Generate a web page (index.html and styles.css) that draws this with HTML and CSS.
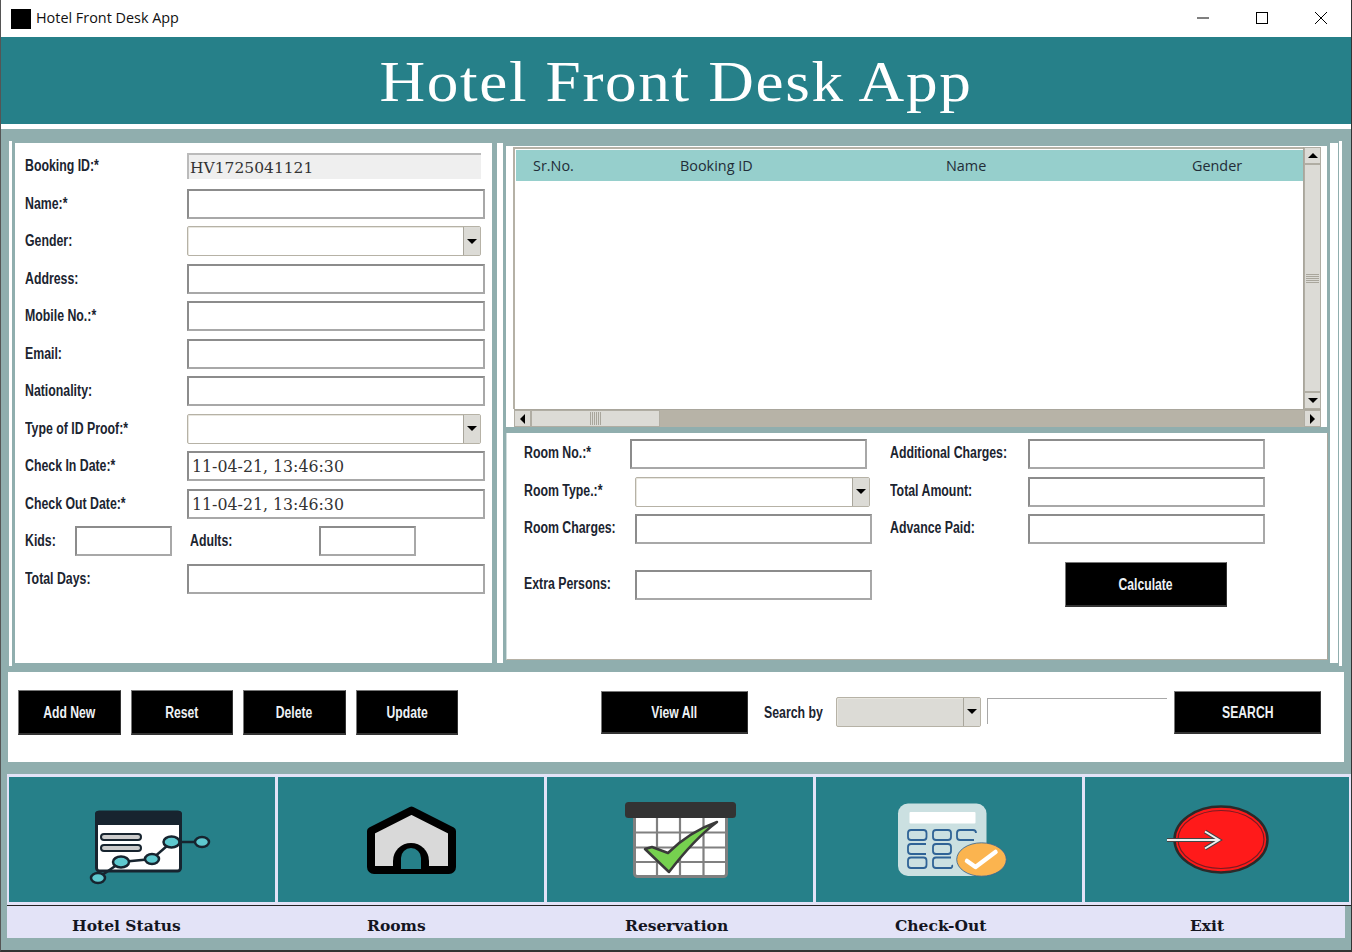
FILE: index.html
```html
<!DOCTYPE html>
<html lang="en">
<head>
<meta charset="utf-8">
<title>Hotel Front Desk App</title>
<link rel="stylesheet" href="styles.css">
</head>
<body>
<div class="window">
  <header class="titlebar">
    <span class="app-icon"></span>
    <span class="app-name">Hotel Front Desk App</span>
    <div class="win-controls">
      <svg class="win-btn" viewBox="0 0 12 12"><path d="M0 6H12" stroke="#000" fill="none"/></svg>
      <svg class="win-btn" viewBox="0 0 12 12"><rect x=".5" y=".5" width="11" height="11" stroke="#000" fill="none"/></svg>
      <svg class="win-btn" viewBox="0 0 12 12"><path d="M0 0L12 12M12 0L0 12" stroke="#000" fill="none"/></svg>
    </div>
  </header>
  <div class="banner"><h1>Hotel Front Desk App</h1></div>

  <main class="workspace">
    <div class="panels">
      <i class="stripe"></i>
      <section class="guest-panel">
        <div class="row"><label>Booking ID:*</label><div class="field readonly">HV1725041121</div></div>
        <div class="row"><label>Name:*</label><div class="field"></div></div>
        <div class="row"><label>Gender:</label><div class="combo"><span class="combo-btn"><b class="tri"></b></span></div></div>
        <div class="row"><label>Address:</label><div class="field"></div></div>
        <div class="row"><label>Mobile No.:*</label><div class="field"></div></div>
        <div class="row"><label>Email:</label><div class="field"></div></div>
        <div class="row"><label>Nationality:</label><div class="field"></div></div>
        <div class="row"><label>Type of ID Proof:*</label><div class="combo"><span class="combo-btn"><b class="tri"></b></span></div></div>
        <div class="row"><label>Check In Date:*</label><div class="field value">11-04-21, 13:46:30</div></div>
        <div class="row"><label>Check Out Date:*</label><div class="field value">11-04-21, 13:46:30</div></div>
        <div class="row kids-row">
          <label class="lbl-kids">Kids:</label><div class="field small"></div>
          <label class="lbl-adults">Adults:</label><div class="field small"></div>
        </div>
        <div class="row"><label>Total Days:</label><div class="field"></div></div>
      </section>
      <i class="stripe mid"></i>

      <div class="right-col">
        <section class="table-panel">
          <div class="table-inner">
            <div class="table-main">
              <div class="thead">
                <span>Sr.No.</span><span>Booking ID</span><span>Name</span><span>Gender</span>
              </div>
              <div class="tbody"></div>
            </div>
            <div class="vscroll">
              <span class="sb-btn"><b class="tri up"></b></span>
              <span class="sb-thumb-v"><i class="grip-h"></i></span>
              <span class="sb-btn"><b class="tri"></b></span>
            </div>
          </div>
          <div class="hscroll">
            <span class="sb-btn"><b class="tri left"></b></span>
            <span class="sb-thumb-h"><i class="grip-v"></i></span>
            <span class="sb-track"></span>
            <span class="sb-btn"><b class="tri right"></b></span>
          </div>
        </section>
        <section class="room-panel">
          <div class="room-left">
            <div class="room-row"><label>Room No.:*</label><div class="field room-w"></div></div>
            <div class="room-row"><label>Room Type.:*</label><div class="combo room-combo"><span class="combo-btn"><b class="tri"></b></span></div></div>
            <div class="room-row"><label>Room Charges:</label><div class="field room-w"></div></div>
            <div class="room-row extra"><label>Extra Persons:</label><div class="field room-w"></div></div>
          </div>
          <div class="room-right">
            <div class="room-row"><label>Additional Charges:</label><div class="field room-w"></div></div>
            <div class="room-row"><label>Total Amount:</label><div class="field room-w"></div></div>
            <div class="room-row"><label>Advance Paid:</label><div class="field room-w"></div></div>
            <button class="btn calc"><span>Calculate</span></button>
          </div>
        </section>
      </div>
      <div class="side-stripes"><i></i><i></i></div>
    </div>

    <section class="actions">
      <div class="action-btns">
        <button class="btn act"><span>Add New</span></button>
        <button class="btn act"><span>Reset</span></button>
        <button class="btn act"><span>Delete</span></button>
        <button class="btn act"><span>Update</span></button>
      </div>
      <div class="search">
        <button class="btn wide"><span>View All</span></button>
        <label class="search-lbl">Search by</label>
        <div class="combo grey"><span class="combo-btn"><b class="tri"></b></span></div>
        <div class="search-input"></div>
        <button class="btn wide"><span>SEARCH</span></button>
      </div>
    </section>

    <nav class="tiles">
      <div class="tile">
        <svg class="tile-art" viewBox="0 0 266 125">
          <rect x="87.5" y="35" width="84" height="59" rx="3" fill="#fff" stroke="#17242f" stroke-width="3"/>
          <path d="M86 48V37a3 3 0 0 1 3-3h81a3 3 0 0 1 3 3v11z" fill="#17242f"/>
          <rect x="92" y="57" width="40" height="6" rx="3" fill="#ccc" stroke="#17242f" stroke-width="2"/>
          <rect x="92" y="68" width="40" height="6" rx="3" fill="#ccc" stroke="#17242f" stroke-width="2"/>
          <path d="M89 101L112 85L143 82L162.500 65L193 65" fill="none" stroke="#17242f" stroke-width="2.500"/>
          <g fill="#5ec9cf" stroke="#17242f" stroke-width="2.500">
            <ellipse cx="89" cy="101" rx="7" ry="5"/><ellipse cx="112" cy="85" rx="8" ry="5.500"/>
            <ellipse cx="143" cy="82" rx="7" ry="5"/><ellipse cx="162.500" cy="65" rx="8" ry="5.500"/>
            <ellipse cx="193" cy="65" rx="7" ry="5"/>
          </g>
        </svg>
      </div>
      <div class="tile">
        <svg class="tile-art" viewBox="0 0 266 125">
          <path fill="#d9d9d9" stroke="#000" stroke-width="8" stroke-linejoin="round" d="M133.500 33.500L174 54V90a3 3 0 0 1-3 3H96a3 3 0 0 1-3-3V54z"/>
          <path fill="#000" d="M115 95V84a18 18 0 0 1 36 0V95z"/>
          <path fill="#268089" d="M123 92V81a10 10 0 0 1 20 0V92z"/>
        </svg>
      </div>
      <div class="tile">
        <svg class="tile-art" viewBox="0 0 266 125">
          <rect x="87.500" y="35" width="92" height="64.500" rx="3" fill="#fff" stroke="#808080" stroke-width="3"/>
          <path d="M110 38V99M133 38V99M156.500 38V99M88 55.500H179M88 70.500H179M88 85H179" stroke="#808080" stroke-width="2.200" fill="none"/>
          <rect x="78" y="25" width="111" height="16" rx="3.500" fill="#333"/>
          <path d="M98 72L105 70L121 76C135 62 150 52 170 45C150 60 135 78 122 95Z" fill="#76d14f" stroke="#3a3a3a" stroke-width="2.500" stroke-linejoin="round"/>
        </svg>
      </div>
      <div class="tile">
        <svg class="tile-art" viewBox="0 0 266 125">
          <rect x="82" y="26.500" width="88.500" height="72.500" rx="10" fill="#cbe0e1"/>
          <rect x="93.500" y="35" width="66" height="11.500" rx="1" fill="#fff"/>
          <g fill="none" stroke="#2f6396" stroke-width="1.800">
            <rect x="92" y="53" width="18.500" height="10" rx="3"/><rect x="117" y="53" width="18" height="10" rx="3"/>
            <path d="M144 53H157a3 3 0 0 1 3 3M144 53a3 3 0 0 0-3 3v4a3 3 0 0 0 3 3H158"/>
            <path d="M110 67H95a3 3 0 0 0-3 3v4a3 3 0 0 0 3 3H110"/><rect x="117" y="67" width="18" height="10" rx="3"/>
            <rect x="92" y="80.500" width="18.500" height="10.500" rx="3"/>
            <path d="M135 80.500H120a3 3 0 0 0-3 3v4.500a3 3 0 0 0 3 3H134a2 2 0 0 0 2-3"/>
          </g>
          <ellipse cx="165.500" cy="82.500" rx="24.800" ry="16.700" fill="#fbb44f" stroke="#2f6396" stroke-width=".8"/>
          <path d="M151 84L159.500 90L179.500 75" fill="none" stroke="#fff" stroke-width="4.500" stroke-linecap="round" stroke-linejoin="round"/>
        </svg>
      </div>
      <div class="tile">
        <svg class="tile-art" viewBox="0 0 264 125">
          <ellipse cx="136" cy="62.500" rx="46.500" ry="33" fill="#ff1a1a" stroke="#2a2a2a" stroke-width="2.500"/>
          <ellipse cx="136" cy="62.500" rx="43" ry="29" fill="none" stroke="#7a1c22" stroke-width="1.200"/>
          <path d="M82 63H134M120 54.500L134 63L120 71.500" fill="none" stroke="#444" stroke-width="4"/>
          <path d="M82 63H134M120 54.500L134 63L120 71.500" fill="none" stroke="#f0f0f0" stroke-width="2"/>
        </svg>
      </div>
    </nav>
    <div class="captions">
      <span>Hotel Status</span>
      <span>Rooms</span>
      <span>Reservation</span>
      <span>Check-Out</span>
      <span>Exit</span>
    </div>
  </main>
</div>
</body>
</html>
```
FILE: styles.css
```css
* { box-sizing: border-box; }
html, body { margin: 0; padding: 0; }
body { width: 1352px; height: 952px; overflow: hidden; background: #90aeae; font-family: "Liberation Sans", sans-serif; }
.window { width: 1352px; height: 952px; display: flex; flex-direction: column; border-left: 1px solid #555; border-right: 1px solid #333; border-bottom: 2px solid #333; }

.titlebar { height: 37px; flex: none; background: #fff; display: flex; align-items: center; padding-left: 10px; }
.app-icon { width: 20px; height: 20px; background: #000; margin-right: 5px; }
.app-name { font: 14.4px "Open Sans", sans-serif; color: #111; margin-bottom: 2px; }
.win-controls { margin-left: auto; display: flex; gap: 47px; padding-right: 24px; margin-bottom: 1px; }
.win-btn { width: 12px; height: 12px; display: block; }

.banner { height: 92px; flex: none; background: #268089; border-bottom: 5px solid #fff; display: flex; justify-content: center; align-items: center; }
.banner h1 { margin: 2px 0 0; font: 400 58px "Liberation Serif", serif; color: #fff; letter-spacing: 1.500px; white-space: nowrap; transform: scaleX(1.09); }

.workspace { flex: 1; display: flex; flex-direction: column; min-height: 0; }
.panels { display: flex; height: 543px; flex: none; padding: 12px 0 0 8px; }
.stripe { width: 3px; flex: none; background: #fff; margin: 0 3px 6px 0; }
.stripe.mid { width: 6px; margin: 2px 3px 9px 5px; }

.guest-panel { width: 477px; height: 520px; flex: none; margin-top: 2px; background: #fff; padding: 8px 0 0 10px; }
.row { height: 37.5px; display: flex; align-items: flex-start; }
.row label { width: 162px; padding-top: 5px; flex: none; }
label { font-size: 16px; font-weight: 700; color: #1b2430; line-height: 20px; white-space: nowrap; transform: scaleX(.77); transform-origin: left center; }
.field { width: 297.500px; height: 30px; flex: none; background: #fff; border: 2px solid; border-color: #8c8c8c #a8a8a8 #a8a8a8 #8c8c8c; font: 15.800px/28px "DejaVu Serif", serif; color: #333; padding-left: 3px; }
.readonly { width: 294px; height: 26px; line-height: 27px; font-size: 15.500px; background: #efefef; border: 0; border-top: 2px solid #bbb; border-left: 2px solid #bbb; padding-left: 1px; margin-top: 2px; }
.combo { width: 294px; height: 30px; flex: none; background: #fff; border: 1px solid #b6b2a6; border-radius: 2px; display: flex; justify-content: flex-end; box-shadow: inset 1px 1px 0 #e8e6df; }
.combo-btn { width: 17px; background: #dcdbd6; border-left: 1px solid #a9a69c; display: flex; align-items: center; justify-content: center; }
.tri { width: 0; height: 0; border-left: 5px solid transparent; border-right: 5px solid transparent; border-top: 5.5px solid #000; display: block; }
.tri.up { border-top: 0; border-bottom: 5.5px solid #000; }
.tri.left { border: 5px solid transparent; border-left: 0; border-right: 5.5px solid #000; }
.tri.right { border: 5px solid transparent; border-right: 0; border-left: 5.5px solid #000; }
.kids-row .lbl-kids { width: 50px; }
.field.small { width: 97px; }
.kids-row .lbl-adults { width: 129px; margin-left: 18px; }

.right-col { width: 822px; flex: none; display: flex; flex-direction: column; }
.table-panel { height: 281px; flex: none; background: #fff; margin: 5px 1px 0 0; padding: 1px 6px 0 7px; display: flex; flex-direction: column; }
.table-inner { display: flex; flex: 1; min-height: 0; }
.table-main { flex: 1; display: flex; flex-direction: column; border-top: 2px solid #b5b1a6; border-left: 2px solid #b5b1a6; padding: 1px 0 0 1px; }
.thead { height: 31px; background: #96cfcc; font: 14.400px/31px "Open Sans", sans-serif; color: #222d38; display: grid; grid-template-columns: 147px 266px 246px 1fr; padding-left: 17px; flex: none; }
.tbody { flex: 1; background: #fff; }
.vscroll { width: 18px; flex: none; display: flex; flex-direction: column; background: #b7b3a7; border-left: 1px solid #a9a69c; }
.sb-btn { width: 17px; height: 17px; background: #dcdbd6; border: 1px solid #b0ada3; display: flex; align-items: center; justify-content: center; flex: none; }
.sb-thumb-v { flex: 1; background: #dcdbd6; border: 1px solid #b0ada3; display: flex; align-items: center; justify-content: center; }
.grip-h { width: 13px; height: 9px; background: repeating-linear-gradient(to bottom, #a9a69c 0 1px, #dcdbd6 1px 2px); }
.hscroll { height: 18px; display: flex; flex: none; margin-left: 1px; background: #b7b3a7; border-top: 1px solid #a9a69c; }
.sb-thumb-h { width: 129px; background: #dcdbd6; border: 1px solid #b0ada3; display: flex; align-items: center; justify-content: center; }
.grip-v { width: 11px; height: 13px; background: repeating-linear-gradient(to right, #a9a69c 0 1px, #dcdbd6 1px 2px); }
.sb-track { flex: 1; }

.room-panel { height: 227px; flex: none; margin-top: 6px; background: #fff; display: flex; border-left: 1px solid #cfdcdc; border-right: 1px solid #a9a69c; border-bottom: 1px solid #b5b1a6; padding: 6px 0 0 17px; }
.room-left { width: 366px; flex: none; }
.room-right { width: 400px; flex: none; }
.room-row { height: 37.5px; display: flex; align-items: flex-start; }
.room-row label { padding-top: 4px; flex: none; }
.room-left label { width: 111px; }
.room-left .room-row:first-child label { width: 106px; }
.room-row.extra { margin-top: 18.5px; }
.field.room-w { width: 237px; }
.combo.room-combo { width: 235px; }
.room-right label { width: 138px; }

.btn { background: #000; color: #eef2f6; border: 1px solid; border-color: #777 #333 #333 #777; border-bottom-width: 2px; font-family: "Liberation Sans", sans-serif; font-size: 16px; font-weight: 700; padding: 2px 0 0; display: flex; align-items: center; justify-content: center; }
.btn span { display: block; white-space: nowrap; transform: scaleX(.76); }
.calc { width: 162px; height: 45px; margin: 10.5px 0 0 175px; }

.side-stripes { display: flex; margin-left: 2px; gap: 1px; }
.side-stripes i { display: block; width: 8px; background: #fff; margin: 2px 0 9px; }
.side-stripes i + i { width: 3px; margin: 0 0 6px; }

.actions { height: 90px; flex: none; margin: 0 7px; background: #fff; display: flex; align-items: flex-start; padding: 18px 0 0 10px; }
.action-btns { display: flex; gap: 10px; margin-right: 143px; }
.btn.act { width: 102.500px; height: 45px; }
.search { display: flex; align-items: center; margin-top: 1px; }
.btn.wide { width: 147px; height: 43px; }
.search-lbl { margin-left: 16px; width: 72px; flex: none; }
.combo.grey { width: 145px; background: #dcdbd6; margin: 0 6px 2px 0; }
.search-input { width: 180px; height: 26px; border-top: 1px solid #a8a8a8; border-left: 1px solid #a8a8a8; margin-right: 7px; margin-top: -3px; }

.tiles { margin: 12px 0 0 6px; height: 132px; flex: none; display: flex; background: #e3e3f7; padding: 3px 0 3px 2px; gap: 3px; border-bottom: 1px solid #222; }
.tile { width: 266px; flex: none; background: #268089; }
.tile:last-child { width: 264px; }
.tile-art { display: block; width: 100%; height: 125px; }
.captions { margin-left: 6px; height: 32px; flex: none; width: 1338px; background: #e3e3f7; font: 700 15.5px/40px "DejaVu Serif", serif; color: #14151f; display: grid; grid-template-columns: 360px 258px 270px 295px 1fr; padding: 0; }
.captions span { white-space: nowrap; height: 32px; }
.captions span:first-child { padding-left: 65px; }
```
